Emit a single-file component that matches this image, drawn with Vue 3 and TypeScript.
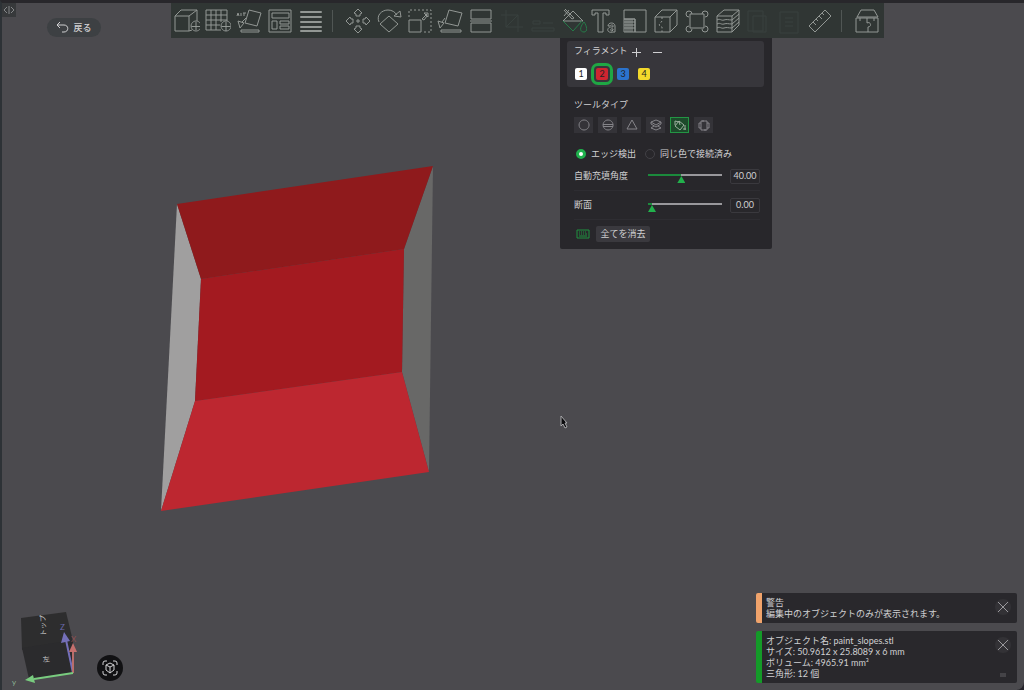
<script setup lang="ts">
import { computed, ref } from 'vue'

interface Tool {
  name: string
  d: string
  accent?: string
  dash?: string
  off?: boolean
}

const sceneTools: Tool[] = [
  { name: 'オブジェクトを追加', d: 'M1 8h14v15H1zM1 8l6-6h16l-8 6M23 2v11M15 23l3-1M22 13a5 5 0 1 0 .1 0M22 14v8M17.500 18.500h9' },
  { name: 'プレートを追加', d: 'M1 2h21v11M1 2v20h15M1 7h21M1 12h21M1 17h14M6 2v20M11 2v20M16 2v12M21 13a5 5 0 1 0 .1 0M21 14v9M16.500 18.500h9' },
  { name: '自動向き調整', d: 'M13 2l12 3-4 13-12-3zM5 22h18v2H5zM1 8l1-3 1 3M5 5v3M7 5h3M8 5v3M2 13l6 2-4 5zM6 14l4-4' },
  { name: '自動配置', d: 'M2 2h22v22H2zM5 5h17v5H5zM5 13h5v8H5zM13 13h9v3h-9zM13 18h9v3h-9z' },
  { name: 'レイヤー', d: 'M2.500 3.500h21v1h-21zM2.500 8.500h21v1h-21zM2.500 13.500h21v1h-21zM2.500 18.500h21v1h-21zM2.500 22.500h21v1h-21z' },
]

const editTools: Tool[] = [
  { name: '移動', d: 'M13 1l4 4-2 1v2h-4V6L9 5zM13 25l4-4-2-1v-2h-4v2l-2 1zM1 13l4-4 1 2h2v4H6l-1 2zM25 13l-4-4-1 2h-2v4h2l1 2zM12 12h2v2h-2z' },
  { name: '回転', d: 'M13 8l9 8-9 8-9-8zM3 14C0 7 6 2 12 2c4 0 7 2 9 5M18 8l6-5 1 6z' },
  { name: '拡大縮小', d: 'M2 12h12v12H2zM15 11l5-5M17 5h4v4zM15 11l2 1 3-4', dash: 'M2 9V2h22v22h-7' },
  { name: '面を下に配置', d: 'M12 2l13 3-4 13-13-3zM4 22h20v2H4zM1 13l6 2-4 5zM5 14l3-4' },
  { name: 'カット', d: 'M3 2h20v9H3zM3 15h20v9H3zM2 13h22' },
  { name: 'ブーリアン', d: 'M7 2v17h17M2 7h17v17M7 19l12-12', off: true },
  { name: '結合', d: 'M2 20h22v3H2zM3 13h7v3H3zM13 15h10', off: true },
  { name: 'カラーペイント', d: 'M2 13L12 3l10 10zM12 3l-3 3M4 1l9 9-2 1-8-9M3 8l5-6', accent: 'M2 13l10 10 9-10M23 14c-5 6-4 10 0 10s3-6 0-10z' },
  { name: 'テキスト', d: 'M1 2h17v5h-3V5h-3v19H7V5H4v2H1zM17 18c0-4 7-4 7 0v6h-2c-7 2-7-6 0-5v-1c0-2-2-1-3 0zM22 21c-3-1-3 2-1 2l1-1z' },
  { name: 'サポートペイント', d: 'M2 2h22v22H13V11H2zM2 11h11v13H2zM4 11v13M6 11v13M8 11v13M10 11v13M2 14h11M2 17h11M2 20h11' },
  { name: 'シームペイント', d: 'M2 9h15v15H2zM2 9l7-7h15l-7 7M24 2v15l-7 7', dash: 'M9 9v4l-3 4 3 2v5' },
  { name: 'メッシュ', d: 'M6 6h14v14H6zM8 6a3 3 0 1 0-3 3M18 6a3 3 0 1 1 3 3M5 18a3 3 0 1 0 3 3M21 18a3 3 0 1 1-3 3' },
  { name: 'ファジースキン', d: 'M2 8h15v16H2zM2 8l7-6h15l-7 6M24 2v15l-7 7M2 12c3-2 4 1 7 0s4 0 8 0l7-6M2 16c3-2 4 1 7 0s4 0 8 0l7-6M2 20c3-2 4 1 7 0s4 0 8 0l7-6' },
  { name: 'コピー', d: 'M3 3h15v20H3zM8 8h13v16H8z', off: true },
  { name: '貼り付け', d: 'M4 4h18v21H4zM9 10h8M9 14h8M9 18h8', off: true },
  { name: '測定', d: 'M18 2l6 6L8 24l-6-6zM6 14l3 3M9 11l2 2M12 8l3 3M15 5l2 2' },
]

const storeTool: Tool = { name: 'アセンブリ', d: 'M3 9l4-7h13l4 7zM2 10h22v14H2zM13 10v5c4-2 5 4 1 4v5M6 10v3M20 10v3' }

const filaments = [
  { id: 1, tone: 'white' },
  { id: 2, tone: 'red' },
  { id: 3, tone: 'blue' },
  { id: 4, tone: 'yellow' },
]
const selectedFilament = ref(2)

const brushes = [
  { name: '円', d: 'M8 3a5 5 0 1 0 .1 0' },
  { name: '球', d: 'M8 3a5 5 0 1 0 .1 0M3 7.500h10M3 9.500h10' },
  { name: '三角形', d: 'M8 3l5 9H3z' },
  { name: '高さ範囲', d: 'M8 3l5 2-5 3-5-3zM3 11l5 2 5-2M3 11l3-2M13 11l-3-2M3 5v2l5 3 5-3V5' },
  { name: '塗りつぶし', d: 'M7 4l5 4-4 5-5-4zM3 4l4 1M3 4v4M7 4l1 4M13 8v5M11 12h3' },
  { name: '隙間充填', d: 'M5 4h6v2h2v5h-2v2H5v-2H3V6h2zM5 6v5M11 6v5M7 3v2M9 12v2' },
]
const selectedBrush = ref('塗りつぶし')

const fillMode = ref('edge')
const angle = ref(40)
const section = ref(0)
const angleFill = computed(() => `${(angle.value / 90) * 100}%`)
const sectionFill = computed(() => `${Math.max(5, section.value * 100)}%`)
</script>

<template>
  <div class="app">
    <svg class="scene" width="1024" height="690" viewBox="0 0 1024 690" aria-label="モデル">
      <polygon points="177,204 201,279 195,401 161,511" fill="#a09f9f" />
      <polygon points="433,166 404,249 402,372 429,472" fill="#686867" />
      <polygon points="177,204 433,166 404,249 201,279" fill="#8f1a1c" />
      <polygon points="201,279 404,249 402,372 195,401" fill="#a31a20" />
      <polygon points="195,401 402,372 429,472 161,511" fill="#bd2730" />
      <polygon points="561,416 561,426 563,424 565,428 567,427 565,423 567,423" fill="#0c0c0e" stroke="#aaaaac" />
    </svg>

    <header class="header">
      <button class="collapse" aria-label="サイドバー">
        <svg width="12" height="12" viewBox="0 0 12 12"><path d="M4 3L1 6l3 3M8 3l3 3-3 3M6 2v8" /></svg>
      </button>
      <button class="back">
        <svg width="13" height="13" viewBox="0 0 13 13"><path d="M4 1L1 4l3 3M1 4h7c5 0 5 7 0 7H6" /></svg>
        <span>戻る</span>
      </button>

      <nav class="toolbar">
        <div class="group">
          <button v-for="t in sceneTools" :key="t.name" class="tool" :aria-label="t.name">
            <svg viewBox="0 0 26 26"><path :d="t.d" /></svg>
          </button>
        </div>
        <span class="sep"></span>
        <div class="group edit">
          <button v-for="t in editTools" :key="t.name" class="tool" :class="{ off: t.off }" :disabled="t.off" :aria-label="t.name">
            <svg viewBox="0 0 26 26">
              <path :d="t.d" />
              <path v-if="t.accent" class="accent" :d="t.accent" />
              <path v-if="t.dash" class="dash" :d="t.dash" />
            </svg>
          </button>
        </div>
        <span class="sep"></span>
        <button class="tool" :aria-label="storeTool.name">
          <svg viewBox="0 0 26 26"><path :d="storeTool.d" /></svg>
        </button>

        <section class="panel">
          <div class="card">
            <div class="card-head">
              <span>フィラメント</span>
              <button aria-label="追加"><svg width="9" height="9" viewBox="0 0 9 9"><path d="M4.500 0v9M0 4.500h9" /></svg></button>
              <button aria-label="削除"><svg width="9" height="9" viewBox="0 0 9 9"><path d="M0 4.500h9" /></svg></button>
            </div>
            <div class="swatches">
              <button
                v-for="f in filaments"
                :key="f.id"
                class="swatch"
                :class="[f.tone, { selected: f.id === selectedFilament }]"
                @click="selectedFilament = f.id"
              >{{ f.id }}</button>
            </div>
          </div>

          <div class="body">
            <div class="row title">ツールタイプ</div>
            <div class="brushes">
              <button
                v-for="b in brushes"
                :key="b.name"
                class="brush"
                :class="{ active: b.name === selectedBrush }"
                :aria-label="b.name"
                @click="selectedBrush = b.name"
              >
                <svg width="16" height="16" viewBox="0 0 16 16"><path :d="b.d" /></svg>
              </button>
            </div>
            <div class="row modes">
              <label><input v-model="fillMode" type="radio" name="mode" value="edge" />エッジ検出</label>
              <label><input v-model="fillMode" type="radio" name="mode" value="color" />同じ色で接続済み</label>
            </div>
            <div class="row slider">
              <label for="angle">自動充填角度</label>
              <input id="angle" v-model.number="angle" type="range" min="0" max="90" :style="{ '--fill': angleFill }" />
              <input class="value" type="text" aria-label="自動充填角度の値" :value="angle.toFixed(2)" />
            </div>
            <hr />
            <div class="row slider">
              <label for="section">断面</label>
              <input id="section" v-model.number="section" type="range" min="0" max="1" step="0.01" :style="{ '--fill': sectionFill }" />
              <input class="value" type="text" aria-label="断面の値" :value="section.toFixed(2)" />
            </div>
            <hr />
            <div class="row actions">
              <button class="keys" aria-label="ショートカット">
                <svg width="14" height="10" viewBox="0 0 14 10"><path d="M1 1h12v8H1zM3 3h1M5 3h1M7 3h1M9 3h1M3 5h1M5 5h1M7 5h1M9 5h2M3 7h8" /></svg>
              </button>
              <button class="clear">全てを消去</button>
            </div>
          </div>
        </section>
      </nav>
    </header>

    <footer class="footer">
      <div class="views">
        <svg class="gizmo" width="78" height="82" viewBox="2 608 78 82" aria-label="視点キューブ">
          <polygon points="21,618 66,612 73,641 22,650" fill="#2d2d2e" />
          <polygon points="22,648 73,640 73,673 29,679" fill="#2b2b2d" />
          <text class="face" transform="translate(46 636) rotate(-92)">トップ</text>
          <text class="face" transform="translate(43 662) rotate(-5)">左</text>
          <g stroke-width="2">
            <line x1="73" y1="673" x2="66" y2="640" stroke="#746fb8" />
            <polygon points="61,643 64,632 70,641" fill="#746fb8" />
            <line x1="73" y1="673" x2="73" y2="651" stroke="#b86d6b" />
            <polygon points="69,652 73,643 77,652" fill="#c46f6d" />
            <line x1="73" y1="673" x2="34" y2="679" stroke="#79cc7f" />
            <polygon points="25,680 33,675 35,683" fill="#79cc7f" />
          </g>
          <text x="60" y="630" class="axis z">Z</text>
          <text x="71" y="642" class="axis x">X</text>
          <text x="12" y="685" class="axis y">y</text>
        </svg>
        <button class="fit" aria-label="ビューに合わせる">
          <svg width="18" height="18" viewBox="0 0 18 18"><path d="M2 6V4q0-2 2-2h2M12 2h2q2 0 2 2v2M16 12v2q0 2-2 2h-2M6 16H4q-2 0-2-2v-2M9 4l4 2v5l-4 3-4-3V6zM5 6l4 2 4-2M9 8v6" /></svg>
        </button>
      </div>

      <div class="toasts">
        <article class="toast warn">
          <p>警告<br />編集中のオブジェクトのみが表示されます。</p>
          <button class="close" aria-label="閉じる"><svg width="16" height="16" viewBox="0 0 16 16"><path d="M3 3l10 10M13 3L3 13" /></svg></button>
        </article>
        <article class="toast info">
          <p>オブジェクト名: paint_slopes.stl<br />サイズ: 50.9612 x 25.8089 x 6 mm<br />ボリューム: 4965.91 mm³<br />三角形: 12 個</p>
          <div class="side">
            <button class="close" aria-label="閉じる"><svg width="16" height="16" viewBox="0 0 16 16"><path d="M3 3l10 10M13 3L3 13" /></svg></button>
            <button class="min" aria-label="最小化"></button>
          </div>
        </article>
      </div>
    </footer>
  </div>
</template>

<style>
body {
  margin: 0;
  background: #25242a;
}
</style>

<style scoped>
.app {
  position: relative;
  box-sizing: border-box;
  min-height: 100vh;
  display: flex;
  flex-direction: column;
  justify-content: space-between;
  overflow: hidden;
  border-top: 3px solid #28272b;
  border-left: 2px solid #2d3236;
  border-bottom-right-radius: 8px;
  background: #4b4a4e;
  color: #d0d0d2;
  font: 9px/16px Lato, "Noto Sans CJK JP", sans-serif;
}
.scene {
  position: absolute;
  left: -2px;
  top: -3px;
}
button {
  display: flex;
  align-items: center;
  justify-content: center;
  padding: 0;
  border: 0;
  background: none;
  color: inherit;
  font: inherit;
}
svg path {
  fill: none;
  stroke: currentColor;
}
.header,
.footer {
  position: relative;
  display: flex;
}
.header {
  align-items: flex-start;
}
.collapse {
  width: 14px;
  height: 14px;
  background: #37393b;
  color: #858789;
}
.back {
  width: 54px;
  height: 19px;
  margin: 15px 70px 0 31px;
  gap: 4px;
  border-radius: 10px;
  background: #3d4043;
  font-weight: 500;
}
.toolbar {
  position: relative;
  display: flex;
  align-items: center;
  height: 35px;
  padding: 0 4px 0 3px;
  background: #303634;
}
.group {
  display: flex;
  gap: 5px;
}
.edit {
  width: 488px;
  gap: 0;
  justify-content: space-between;
}
.sep {
  width: 1px;
  height: 22px;
  margin: 0 12px 0 8px;
  background: #505654;
}
.tool {
  width: 26px;
  height: 26px;
  color: #929794;
}
.tool svg {
  width: 26px;
  height: 26px;
}
.tool.off {
  color: #38413e;
}
.accent {
  color: #267b49;
}
.dash {
  stroke-dasharray: 2 2;
}
.panel {
  position: absolute;
  left: 389px;
  top: 100%;
  box-sizing: border-box;
  width: 212px;
  padding: 3px 8px 7px 7px;
  border-radius: 0 0 2px 2px;
  background: #28272b;
}
.card {
  padding: 0 7px;
  border-radius: 3px;
  background: #37363b;
}
.card-head {
  display: flex;
  align-items: center;
  height: 20px;
  gap: 5px;
}
.card-head span {
  margin-right: -4px;
}
.card-head button {
  width: 16px;
  height: 16px;
  padding-top: 3px;
}
.swatches {
  display: flex;
  align-items: center;
  height: 26px;
  gap: 9px;
  padding-left: 1px;
}
.swatch {
  width: 12px;
  height: 12px;
  border-radius: 2px;
  color: #222;
}
.white { background: #fff; }
.red { background: #cf2530; }
.blue { background: #2b73cc; }
.yellow { background: #f3d92b; }
.selected {
  outline: 3px solid #1fa744;
  outline-offset: 2px;
}
.body {
  padding: 10px 4px 0 7px;
}
.row {
  display: flex;
  align-items: center;
  height: 16px;
}
.brushes {
  display: flex;
  gap: 5px;
  margin: 4px 0 13px;
}
.brush {
  box-sizing: border-box;
  width: 19px;
  height: 16px;
  background: #343338;
  color: #858489;
}
.brush.active {
  border: 1px solid #239544;
  background: #1d4a2b;
  color: #9caf9f;
}
.modes {
  gap: 7px;
  margin-bottom: 6px;
}
.modes label {
  display: flex;
  align-items: center;
  gap: 5px;
}
input {
  appearance: none;
  margin: 0;
}
input[type="radio"] {
  box-sizing: border-box;
  width: 10px;
  height: 10px;
  margin-left: 2px;
  border: 1px solid #424146;
  border-radius: 50%;
}
input[type="radio"]:checked {
  border: 3px solid #1fb04c;
  background: #fff;
}
.slider label {
  width: 75px;
}
input[type="range"] {
  width: 74px;
  height: 16px;
  background: none;
}
input[type="range"]::-webkit-slider-runnable-track {
  height: 16px;
  background: linear-gradient(to right, #1b8a3c var(--fill), #99989c var(--fill)) 0 6px / 100% 2px no-repeat;
}
input[type="range"]::-webkit-slider-thumb {
  appearance: none;
  width: 8px;
  height: 7px;
  margin-top: 8px;
  background: #22b14c;
  clip-path: polygon(50% 0, 100% 100%, 0 100%);
}
.value {
  box-sizing: border-box;
  width: 30px;
  height: 15px;
  margin-left: 8px;
  padding: 0;
  border: 1px solid #3a393e;
  border-radius: 2px;
  background: none;
  color: inherit;
  font: inherit;
  text-align: center;
}
hr {
  height: 1px;
  margin: 6px 0;
  border: 0;
  background: #2e2d32;
}
.actions {
  gap: 6px;
  padding-left: 2px;
}
.keys {
  color: #1f9341;
}
.clear {
  width: 54px;
  height: 16px;
  border-radius: 2px;
  background: #3a393e;
}
.footer {
  align-items: flex-end;
  justify-content: space-between;
  padding-right: 7px;
}
.views {
  display: flex;
  align-items: flex-end;
}
.gizmo {
  display: block;
}
.face {
  fill: #c8c8c8;
  font-size: 7px;
}
.axis {
  font-size: 8px;
}
.z { fill: #6a69ac; }
.x { fill: #8f4f50; }
.y { fill: #8db394; }
.fit {
  width: 26px;
  height: 26px;
  margin: 0 0 9px 17px;
  border-radius: 50%;
  background: #111113;
  color: #d2d2d4;
}
.toasts {
  display: flex;
  flex-direction: column;
  gap: 8px;
  width: 261px;
  padding-bottom: 7px;
}
.toast {
  display: flex;
  align-items: flex-start;
  justify-content: space-between;
  box-sizing: border-box;
  min-height: 30px;
  padding: 4px 6px 4px 4px;
  border-left: 6px solid #f0a36b;
  border-radius: 2px;
  background: #29282c;
}
.info {
  min-height: 51px;
  border-color: #149a28;
}
.toast p {
  margin: 0;
  line-height: 11px;
}
.close {
  width: 16px;
  height: 16px;
  margin-top: 2px;
  border-radius: 50%;
  background: #333236;
  color: #99989c;
}
.side {
  display: flex;
  flex-direction: column;
  align-items: center;
  gap: 20px;
}
.min {
  width: 6px;
  height: 4px;
  background: #444347;
}
</style>
